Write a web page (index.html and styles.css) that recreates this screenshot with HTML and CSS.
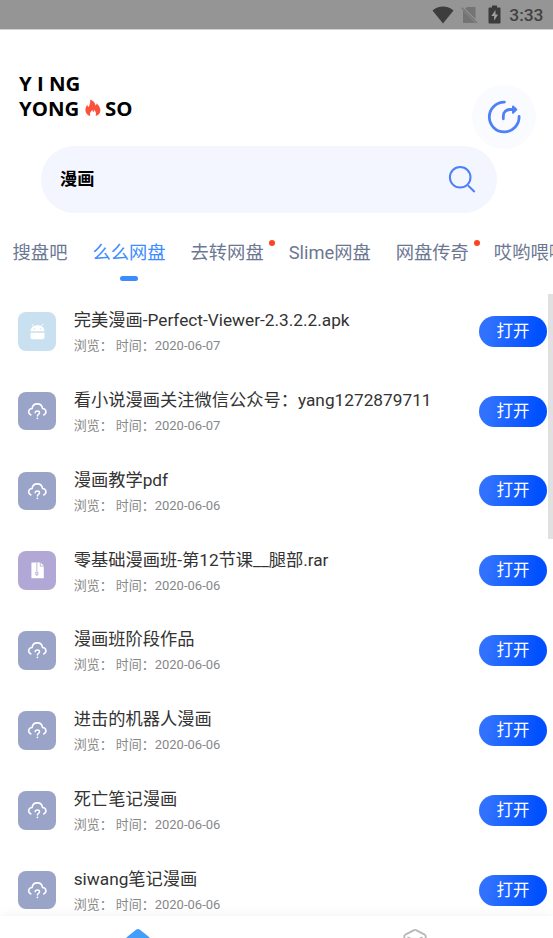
FILE: index.html
```html
<!DOCTYPE html>
<html lang="zh-CN">
<head>
<meta charset="utf-8">
<title>YING YONG SO</title>
<link rel="stylesheet" href="styles.css">
</head>
<body>
<svg class="defs" aria-hidden="true">
  <defs>
    <symbol id="cloud" viewBox="0 0 38 38">
      <path d="M12.700 22.700C9.300 21.200 10 16.300 13.900 16.200 14.200 13.500 16.300 11.700 19 11.700s4.800 1.800 5.100 4.500c3.900.1 4.600 5 1.200 6.500" fill="none" stroke="#fff" stroke-width="1.500" stroke-linecap="round"/>
      <path d="M16.900 20.500c.1-2.400 4.200-2.400 4.300-.1 0 1.600-2.100 1.600-2.100 3.200" fill="none" stroke="#fff" stroke-width="1.400" stroke-linecap="round"/>
      <circle cx="19.100" cy="25.900" r=".9" fill="#fff"/>
    </symbol>
    <symbol id="android" viewBox="0 0 38 38">
      <path d="M15.600 14l-1.700-2M22.800 14l1.700-2" stroke="#fff" stroke-width=".9" stroke-linecap="round"/>
      <path d="M12.300 19c0-3.700 2.900-5.900 6.900-5.900s6.900 2.200 6.900 5.900zM12.300 20.500h13.800v4.600a1.800 1.800 0 0 1-1.800 1.800H14.100a1.800 1.800 0 0 1-1.800-1.800z" fill="#fff"/>
      <circle cx="16.300" cy="16.500" r=".6" fill="#b5d6e7"/><circle cx="22.100" cy="16.500" r=".6" fill="#b5d6e7"/>
    </symbol>
    <symbol id="archive" viewBox="0 0 38 38">
      <path d="M13.200 11.300h8.300v4h3.900v11.500H13.200z" fill="#fff"/>
      <path d="M22.300 11.300l3.100 3.200h-3.100z" fill="#fff"/>
      <path d="M18.500 12.300v8" stroke="#a99fcb" stroke-width="1.500" stroke-dasharray="1 1"/>
      <path d="M17.600 20.700h1.900v3h-1.900z" fill="none" stroke="#a99fcb" stroke-width=".8"/>
    </symbol>
  </defs>
</svg>

<div class="status">
  <svg class="wifi" viewBox="0 0 22 18"><path d="M.5 4.500C6.500-.7 15.500-.7 21.500 4.500L11 17.500z" fill="#3d3d3d"/></svg>
  <svg class="sim" viewBox="0 0 18 18"><path d="M6 1h8.500v16H2V5z" fill="#747474"/><path d="M0 .5l17 17" stroke="#959595" stroke-width="3"/><path d="M.8 1.700l15 15" stroke="#747474" stroke-width="1.300"/></svg>
  <svg class="battery" viewBox="0 0 13 18"><path d="M4 0h5v2h2.500a1 1 0 0 1 1 1v14a1 1 0 0 1-1 1h-10a1 1 0 0 1-1-1V3a1 1 0 0 1 1-1H4z" fill="#3b3b3b"/><path d="M7.500 4.500L3.300 10.500h2.800v4.800l4-6.300H7.500z" fill="#a0a0a0"/></svg>
  <span class="clock">3:33</span>
</div>

<header class="header">
  <div class="logo">
    <div class="logo-line"><span class="logo-y">Y</span><span class="logo-i">I</span><span>NG</span></div>
    <div class="logo-line"><span class="logo-yong">YONG</span><svg class="flame" viewBox="0 0 16 18"><path d="M5.200 17C2.300 16.300.4 14 .4 11c0-2.400 1-4 2-5.300.2 1.200.5 1.900 1.300 2.400C4.500 5 5.900 3.500 5 .4c3 .8 5.300 3.300 5.500 6.100.7-.5 1.100-1.200 1.100-2.100 2 1.500 3.800 4 3.800 6.800 0 3-1.900 5.200-4.800 5.900.9-2.500.4-4.500-1.600-6.400.1 1.100-.2 1.900-.8 2.500-.5-.7-.8-1.300-.7-2.100-2 1.500-3 3.300-2.300 5.900z" fill="#fc523b"/></svg><span>SO</span></div>
  </div>
  <div class="share">
    <svg viewBox="0 0 34 34"><g fill="none" stroke="#4e80f7" stroke-linecap="round" stroke-linejoin="round"><path d="M17.400 2.100A14.900 14.900 0 1 0 32.100 16.500" stroke-width="2.800"/><path d="M16.300 18.800v-2.600c0-4 2.700-6.700 7.200-6.700h4" stroke-width="2.800"/><path d="M26 6.500l3.300 3-3.300 3.200z" stroke-width="2" fill="#4e80f7"/></g></svg>
  </div>
</header>

<div class="search">
  <span class="query">漫画</span>
  <svg viewBox="0 0 28 28"><circle cx="12.200" cy="12.300" r="10.300" fill="none" stroke="#4d80f8" stroke-width="2"/><path d="M20.500 21l5.700 5.400" stroke="#4d80f8" stroke-width="2" stroke-linecap="round"/></svg>
</div>

<nav class="tabs">
  <span class="tab">搜盘吧</span>
  <span class="tab active">么么网盘</span>
  <span class="tab dot">去转网盘</span>
  <span class="tab">Slime网盘</span>
  <span class="tab dot">网盘传奇</span>
  <span class="tab">哎哟喂啊</span>
</nav>

<main class="list">
  <div class="row"><svg class="icon sky"><use href="#android"/></svg><div class="info"><div class="title">完美漫画-Perfect-Viewer-2.3.2.2.apk</div><div class="meta"><span>浏览：</span><span>时间：2020-06-07</span></div></div><button class="open">打开</button></div>
  <div class="row"><svg class="icon"><use href="#cloud"/></svg><div class="info"><div class="title">看小说漫画关注微信公众号：yang1272879711</div><div class="meta"><span>浏览：</span><span>时间：2020-06-07</span></div></div><button class="open">打开</button></div>
  <div class="row"><svg class="icon"><use href="#cloud"/></svg><div class="info"><div class="title">漫画教学pdf</div><div class="meta"><span>浏览：</span><span>时间：2020-06-06</span></div></div><button class="open">打开</button></div>
  <div class="row"><svg class="icon violet"><use href="#archive"/></svg><div class="info"><div class="title">零基础漫画班-第12节课__腿部.rar</div><div class="meta"><span>浏览：</span><span>时间：2020-06-06</span></div></div><button class="open">打开</button></div>
  <div class="row"><svg class="icon"><use href="#cloud"/></svg><div class="info"><div class="title">漫画班阶段作品</div><div class="meta"><span>浏览：</span><span>时间：2020-06-06</span></div></div><button class="open">打开</button></div>
  <div class="row"><svg class="icon"><use href="#cloud"/></svg><div class="info"><div class="title">进击的机器人漫画</div><div class="meta"><span>浏览：</span><span>时间：2020-06-06</span></div></div><button class="open">打开</button></div>
  <div class="row"><svg class="icon"><use href="#cloud"/></svg><div class="info"><div class="title">死亡笔记漫画</div><div class="meta"><span>浏览：</span><span>时间：2020-06-06</span></div></div><button class="open">打开</button></div>
  <div class="row"><svg class="icon"><use href="#cloud"/></svg><div class="info"><div class="title">siwang笔记漫画</div><div class="meta"><span>浏览：</span><span>时间：2020-06-06</span></div></div><button class="open">打开</button></div>
  <div class="scrollbar"></div>
</main>

<footer class="bottom">
  <div class="nav-item"><svg viewBox="0 0 26 24"><path d="M11 1.700a3.400 3.400 0 0 1 4 0l9 7.200a3 3 0 0 1 1 2.300V24H1V11.200a3 3 0 0 1 1-2.300z" fill="#439df9"/></svg></div>
  <div class="nav-item"><svg viewBox="0 0 26 24"><path d="M2.300 22V8.400a2 2 0 0 1 1-1.700L12 2.200a2 2 0 0 1 2 0l8.700 4.500a2 2 0 0 1 1 1.700V22" fill="none" stroke="#b9b9b9" stroke-width="1.900"/><path d="M5.500 9.300l3 1.200M20.500 9.300l-3 1.200" stroke="#b9b9b9" stroke-width="1.500"/></svg></div>
</footer>
</body>
</html>
```
FILE: styles.css
```css
* { box-sizing: border-box; }
body {
  margin: 0;
  height: 938px;
  display: flex;
  flex-direction: column;
  overflow: hidden;
  background: #fff;
  font-family: Roboto, "Noto Sans CJK SC", sans-serif;
}
svg { display: block; flex: none; }
.defs { position: absolute; width: 0; height: 0; }

.status {
  flex: none;
  height: 29px;
  display: flex;
  align-items: center;
  justify-content: flex-end;
  padding-right: 9.500px;
  background: #959595;
  box-shadow: 0 1px 0 #d2d2d2;
}
.wifi { width: 22px; height: 18px; }
.sim { width: 18px; height: 18px; margin-left: 7px; }
.battery { width: 13px; height: 19px; margin-left: 9px; }
.clock {
  margin-left: 8px;
  font-size: 17.4px;
  font-weight: 500;
  line-height: 29px;
  color: #414141;
  padding-top: 2px;
}

.header {
  flex: none;
  height: 117px;
  display: flex;
  justify-content: space-between;
  align-items: flex-start;
  padding-left: 19px;
  padding-right: 17px;
}
.logo {
  padding-top: 42px;
  font-family: "Open Sans", sans-serif;
  font-weight: 700;
  font-size: 20.400px;
  color: #000;
}
.logo-line { display: flex; align-items: center; height: 24.500px; line-height: 24px; }
.logo-y { width: 18px; }
.logo-i { width: 12px; }
.logo-yong { width: 65.500px; }
.flame { width: 16px; height: 18px; margin-right: 4.500px; }
.share {
  width: 64px;
  height: 64px;
  margin-top: 56px;
  border-radius: 50%;
  background: #fafbff;
  display: flex;
  align-items: center;
  justify-content: center;
}
.share svg { width: 34px; height: 34px; }

.search {
  flex: none;
  height: 66.500px;
  margin: 0 56px 0 41px;
  padding: 0 21px 0 19px;
  display: flex;
  align-items: center;
  justify-content: space-between;
  border-radius: 34px;
  background: #f3f5ff;
  font-size: 17.200px;
  font-weight: 700;
  color: #000;
}
.query { padding-bottom: 4px; }
.search svg { width: 28px; height: 28px; }

.tabs {
  flex: none;
  height: 78.500px;
  display: flex;
  gap: 25px;
  padding: 25px 0 0 12.600px;
  overflow: hidden;
  white-space: nowrap;
  font-size: 18.300px;
  line-height: 29px;
  color: #6c7792;
}
.tab { position: relative; flex: none; height: 46px; }
.active { color: #3b8cff; }
.active::after {
  content: "";
  display: block;
  width: 18px;
  height: 5px;
  margin: 9px auto 0;
  border-radius: 2.500px;
  background: #3b8cff;
}
.dot::after {
  content: "";
  position: absolute;
  top: 2px;
  right: -11.500px;
  width: 6px;
  height: 6px;
  border-radius: 50%;
  background: #fc4421;
}

.list { position: relative; flex: none; height: 625px; padding-top: .3px; overflow: hidden; }
.row {
  height: 79.850px;
  display: flex;
  align-items: center;
  padding: 0 6px 0 17.500px;
}
.icon { width: 38.600px; height: 38.600px; border-radius: 8px; background: #99a4c8; }
.sky { background: #c8e0ef; }
.violet { background: #b2a8d5; }
.info { flex: 1; min-width: 0; margin-left: 17.600px; padding-top: .8px; }
.title { font-size: 17.250px; line-height: 26px; color: #333; white-space: nowrap; }
.meta {
  display: flex;
  gap: 3px;
  font-size: 13px;
  line-height: 20px;
  margin-top: 3px;
  color: #888;
}
.open {
  flex: none;
  width: 68px;
  height: 31px;
  padding: 0;
  border: 0;
  border-radius: 16px;
  background: linear-gradient(100deg, #3071ff 15%, #0050ff 85%);
  color: #fff;
  font-family: inherit;
  font-size: 16.500px;
  line-height: 31px;
}
.scrollbar {
  position: absolute;
  top: 3px;
  right: 0;
  width: 5px;
  height: 245px;
  background: #e1e1e1;
}

.bottom {
  position: relative;
  flex: none;
  height: 22px;
  display: flex;
  overflow: visible;
  background: #fff;
  box-shadow: 0 -1px 12px rgba(0, 0, 0, .05);
}
.nav-item { flex: 1; display: flex; justify-content: center; height: 22px; overflow: hidden; padding-top: 12px; }
.nav-item svg { width: 26px; height: 24px; }
```
